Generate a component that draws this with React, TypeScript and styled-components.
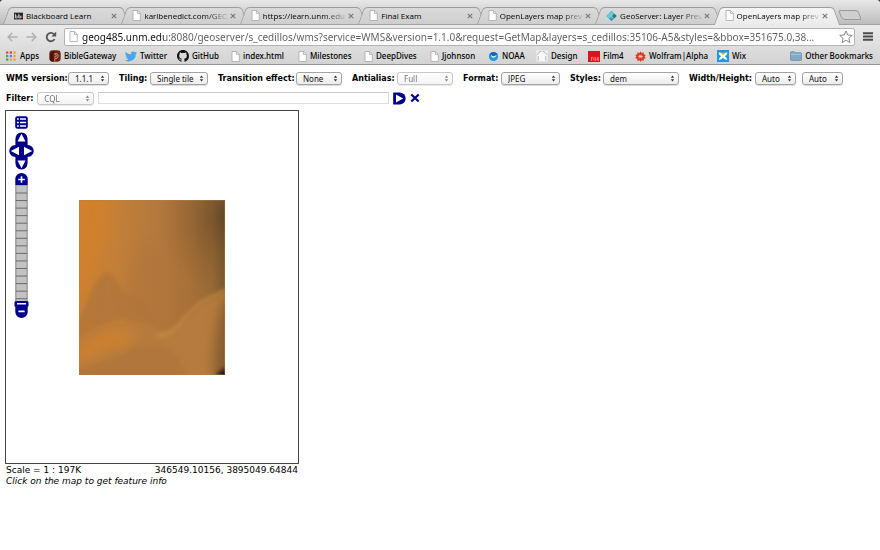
import React from "react";
import styled, { createGlobalStyle, css } from "styled-components";

const Global = createGlobalStyle`
  * { box-sizing: border-box; }
  html, body { margin: 0; background: #fff; }
  button, input, select { font: inherit; color: inherit; margin: 0; padding: 0; border: 0; background: none; }
  svg { display: block; flex: none; }
`;

const UI = `"Noto Sans", "Open Sans", sans-serif`;
const UI_NARROW = `"Open Sans", "Noto Sans", sans-serif`;
const VERDANA = `"DejaVu Sans", sans-serif`;

/* ---------- browser chrome ---------- */

const Chrome = styled.header`
  font-family: ${UI};
  background: linear-gradient(#222 0 4px, #ebebeb 25px, #d3d3d3);
  border-bottom: 1px solid #969696;
`;

const TabStrip = styled.nav`
  display: flex;
  align-items: flex-end;
  height: 25px;
  padding: 0 20px 0 6px;
  background: linear-gradient(#e8e8e8, #bdbdbd);
  border-bottom: 1px solid #a2a2a2;
  border-radius: 3px 3px 0 0;
`;

const Tab = styled.div<{ $active?: boolean }>`
  position: relative;
  isolation: isolate;
  display: flex;
  align-items: center;
  flex: 0 1 119px;
  min-width: 0;
  height: ${(p) => (p.$active ? "18px" : "17px")};
  padding: 0 7px ${(p) => (p.$active ? "1px" : "0")} 8px;
  gap: 3px;
  z-index: ${(p) => (p.$active ? 2 : 1)};
  margin-bottom: ${(p) => (p.$active ? "-1px" : "0")};

  &::before,
  &::after {
    content: "";
    position: absolute;
    z-index: -1;
    top: 0;
    bottom: 0;
    border: 1px solid #9c9c9c;
    border-bottom: 0;
    background: ${(p) => (p.$active ? "linear-gradient(#f4f4f4, #ebebeb)" : "linear-gradient(#dadada, #cecece)")};
  }
  &::before {
    left: 0;
    right: 50%;
    border-right: 0;
    border-top-left-radius: 4px;
    transform: skewX(-20deg);
  }
  &::after {
    left: 45%;
    right: -2px;
    border-left: 0;
    border-top-right-radius: 4px;
    transform: skewX(20deg);
  }
`;

const TabTitle = styled.button<{ $fade?: boolean }>`
  flex: 1;
  min-width: 0;
  text-align: left;
  font-family: ${UI_NARROW};
  font-size: 8px;
  font-weight: 500;
  line-height: 16px;
  color: #000;
  white-space: nowrap;
  ${(p) =>
    p.$fade &&
    css`
      mask-image: linear-gradient(90deg, #000 74%, rgba(0, 0, 0, 0.15));
    `}
`;

const TabClose = styled.button`
  display: flex;
  flex: none;
  align-items: center;
  width: 6px;
  height: 16px;
`;

const NewTab = styled.button`
  flex: none;
  width: 20px;
  height: 10px;
  margin: 0 0 4px 5px;
  border: 1px solid #999;
  border-radius: 2px 3px 2px 4px;
  background: #cfcfcf;
  transform: skewX(20deg);
`;

const NavRow = styled.div`
  display: flex;
  align-items: center;
  height: 23px;
  padding: 0 7px;
  gap: 8px;
`;

const IconButton = styled.button`
  display: flex;
  flex: none;
`;

const Omnibox = styled.form`
  flex: 1;
  min-width: 0;
  display: flex;
  align-items: center;
  gap: 4px;
  height: 18px;
  margin-left: -1px;
  padding: 0 1px 0 4px;
  background: #fff;
  border: 1px solid #b4b4b4;
  border-radius: 2px;
`;

const Address = styled.input`
  flex: 1;
  min-width: 0;
  height: 16px;
  font-family: ${UI};
  font-size: 10px;
  outline: 0;
  color: transparent;
  background: linear-gradient(90deg, #111 82px, #5c5c5c 82px);
  background-clip: text;
`;

const BookmarkBar = styled.nav`
  display: flex;
  align-items: center;
  height: 16px;
  padding: 0 7px 0 5px;
  white-space: nowrap;
`;

const Bookmark = styled.a<{ $w: number }>`
  display: flex;
  align-items: center;
  gap: 3px;
  flex: 0 1 ${(p) => p.$w}px;
  font-size: 8px;
  font-weight: 500;
  line-height: 14px;
  color: #000;
  text-decoration: none;
`;

const OtherBookmarks = styled.button`
  display: flex;
  align-items: center;
  gap: 3px;
  margin-left: auto;
  font-size: 8px;
  font-weight: 500;
  line-height: 14px;
  color: #000;
`;

/* ---------- page ---------- */

const Page = styled.main`
  padding: 6px 5px 0;
  font-family: ${VERDANA};
  font-size: 9px;
  color: #000;
`;

const ControlRow = styled.div`
  display: flex;
  align-items: center;
  height: 14px;
  margin-bottom: 6px;
  padding-left: 1px;

  &:last-of-type {
    margin-bottom: 5px;
  }
`;

const Field = styled.div<{ $w: number }>`
  display: flex;
  align-items: center;
  justify-content: space-between;
  flex: 0 0 ${(p) => p.$w}px;
  margin-right: 10px;
`;

const FieldLabel = styled.label`
  padding-top: 2px;
  font-size: 8px;
  font-weight: 700;
  line-height: 14px;
  white-space: nowrap;
`;

const SelectBox = styled.span<{ $w: number; $off?: boolean }>`
  position: relative;
  display: block;
  flex: none;
  width: ${(p) => p.$w}px;
  opacity: ${(p) => (p.$off ? 0.6 : 1)};
  svg {
    position: absolute;
    right: 4px;
    top: 3px;
    pointer-events: none;
  }
`;

const Select = styled.select`
  display: block;
  appearance: none;
  width: 100%;
  height: 13px;
  padding: 0 10px 0 6px;
  border: 1px solid #a3a3a3;
  border-radius: 3px;
  background: linear-gradient(#fff, #ececec);
  box-shadow: 0 1px 0 #ddd;
  font-family: ${UI};
  font-size: 8px;
  line-height: 11px;
  color: #111;
  opacity: 1;
`;

const Boxes = styled.div`
  display: flex;
  align-items: center;
  gap: 6px;
`;

const FilterRow = styled(ControlRow)`
  gap: 4px;
`;

const FilterInput = styled.input`
  flex: 0 1 291px;
  height: 12px;
  padding: 0 3px;
  border: 1px solid #dedede;
  border-top-color: #cacaca;
  font-size: 8px;
`;

const MapPanel = styled.section`
  width: 294px;
`;

const MapView = styled.div`
  position: relative;
  height: 354px;
  border: 1px solid #444;
  display: flex;
  align-items: center;
  justify-content: center;
`;

const MapControls = styled.div`
  position: absolute;
  left: 3px;
  top: 5px;
  display: flex;
  flex-direction: column;
  align-items: center;
  gap: 3px;
  width: 25px;
`;

const Status = styled.div`
  display: flex;
  justify-content: space-between;
  padding: 1px 1px 0;
  font-size: 9px;
  line-height: 11px;
`;

const Hint = styled.div`
  padding: 0 1px;
  font-size: 9px;
  line-height: 11px;
  font-style: italic;
`;

/* ---------- icons ---------- */

const PageIcon = () => (
  <svg width="9" height="11" viewBox="0 0 9 11">
    <path d="M1 .5h4.6L8.3 3.2V10.5H1z" fill="#fdfdfd" stroke="#a8a8a8" strokeWidth=".8" />
    <path d="M5.4.6v2.8h2.8" fill="none" stroke="#a8a8a8" strokeWidth=".8" />
  </svg>
);

const BbIcon = () => (
  <svg width="9" height="8" viewBox="0 0 10 8">
    <rect width="10" height="7.5" y=".3" fill="#222" />
    <path d="M1.5 1.6v4.6M1.5 4h1.3q1 0 1 1.1t-1 1.1H1.5M5.3 1.6v4.6M5.3 4h1.3q1 0 1 1.1t-1 1.1H5.3" fill="none" stroke="#fff" strokeWidth=".8" />
    <path d="M8.7 3.4v2.8" stroke="#c9a14a" strokeWidth=".8" />
  </svg>
);

const GeoIcon = () => (
  <svg width="11" height="12" viewBox="0 0 12 12">
    <path d="M6 .4 11.6 6 6 11.6.4 6z" fill="#2a9fc0" />
    <path d="M6 .4 8.6 3 6 5.6 3.4 3zM3.2 3.3 5.7 6 3 8.6.4 6z" fill="#5fcbd6" />
    <path d="M8.8 3.3 11.6 6 8.8 8.7 6.2 6z" fill="#1976a6" />
    <path d="M4.2 3l1.8.8L5 5.6zM6 6.6l1.6.7L6 8.6z" fill="#8cc35a" />
    <path d="M3.2 3.2 8.8 8.8M8.8 3.2 3.2 8.8" stroke="#e3f5f8" strokeWidth=".5" />
  </svg>
);

const CloseIcon = () => (
  <svg width="6" height="6" viewBox="0 0 6 6">
    <path d="M.8.8l4.4 4.4M5.2.8.8 5.2" stroke="#777" strokeWidth="1.1" />
  </svg>
);

const Arrow = ({ back }: { back?: boolean }) => (
  <svg width="11" height="10" viewBox="0 0 11 10">
    <path d={back ? "M5.2.8 1.2 5l4 4.2M1.4 5H10.6" : "M5.8.8l4 4.2-4 4.2M9.6 5H.4"} fill="none" stroke="#b2b2b2" strokeWidth="1.6" />
  </svg>
);

const Reload = () => (
  <svg width="12" height="12" viewBox="0 0 12 12">
    <path d="M9.6 8.1A4.2 4.2 0 1 1 9 3.2" fill="none" stroke="#555" strokeWidth="1.8" />
    <path d="M11.2.6v5H6.4z" fill="#555" />
  </svg>
);

const Star = () => (
  <svg width="14" height="14" viewBox="0 0 14 14">
    <path d="M7 1l1.8 4 4.4.4-3.3 2.9 1 4.3L7 10.3l-3.9 2.3 1-4.3L.8 5.4 5.2 5z" fill="#fff" stroke="#777" strokeWidth=".9" strokeLinejoin="round" />
  </svg>
);

const Menu = () => (
  <svg width="10" height="9" viewBox="0 0 10 9">
    <path d="M0 1.2h10M0 4.5h10M0 7.8h10" stroke="#4b4b4b" strokeWidth="2" />
  </svg>
);

const APP_COLOURS = ["#e0493e", "#e0493e", "#e8a33a", "#38a867", "#4a86e0", "#e8a33a", "#38a867", "#e8a33a", "#e8a33a"];
const AppsIcon = () => (
  <svg width="12" height="10" viewBox="0 0 12 10">
    {APP_COLOURS.map((c, i) => (
      <rect key={i} x={1 + (i % 3) * 3.7} y={0.4 + Math.floor(i / 3) * 3.5} width="2.3" height="2.3" fill={c} />
    ))}
  </svg>
);

const BibleIcon = () => (
  <svg width="12" height="12" viewBox="0 0 12 12">
    <rect x=".3" y=".3" width="11.4" height="11.4" rx="3.4" fill="#6e2412" />
    <path d="M1 9.6V4.6Q2.4.9 6.6 1.4 3 3.6 4.4 6.4L5.2 11.4H3Q1.2 11 1 9.6z" fill="#4a1206" />
    <path d="M5.6 11.6 5.9 8.7 8 8.4Q9.8 6.6 9.1 4.6 7.6 2.6 5.4 3.9 7.3 4.1 7.2 6.2L5.2 7.3" fill="#8f3b1e" stroke="#e3c1ab" strokeWidth=".6" />
  </svg>
);

const TwitterIcon = () => (
  <svg width="12" height="11" viewBox="0 0 24 20">
    <path d="M24 2.4a10 10 0 0 1-2.8.8A5 5 0 0 0 23.3.5a10 10 0 0 1-3.1 1.2 4.9 4.9 0 0 0-8.4 4.5A14 14 0 0 1 1.7 1a4.9 4.9 0 0 0 1.5 6.6A5 5 0 0 1 1 7v.1a4.9 4.9 0 0 0 3.9 4.8 5 5 0 0 1-2.2.1 4.9 4.9 0 0 0 4.6 3.4A10 10 0 0 1 0 17.4 14 14 0 0 0 21.5 5a10 10 0 0 0 2.5-2.6z" fill="#4aa6e8" />
  </svg>
);

const GithubIcon = () => (
  <svg width="12" height="12" viewBox="0 0 16 16">
    <path fill="#111" d="M8 0C3.58 0 0 3.58 0 8c0 3.54 2.29 6.53 5.47 7.59.4.07.55-.17.55-.38 0-.19-.01-.82-.01-1.49-2.01.37-2.53-.49-2.69-.94-.09-.23-.48-.94-.82-1.13-.28-.15-.68-.52-.01-.53.63-.01 1.08.58 1.23.82.72 1.21 1.87.87 2.33.66.07-.52.28-.87.51-1.07-1.78-.2-3.64-.89-3.64-3.95 0-.87.31-1.59.82-2.15-.08-.2-.36-1.02.08-2.12 0 0 .67-.21 2.2.82.64-.18 1.32-.27 2-.27s1.36.09 2 .27c1.53-1.04 2.2-.82 2.2-.82.44 1.1.16 1.92.08 2.12.51.56.82 1.27.82 2.15 0 3.07-1.87 3.75-3.65 3.95.29.25.54.73.54 1.48 0 1.07-.01 1.93-.01 2.2 0 .21.15.46.55.38A8 8 0 0 0 16 8c0-4.42-3.58-8-8-8z" />
  </svg>
);

const NoaaIcon = () => (
  <svg width="11" height="11" viewBox="0 0 11 11">
    <circle cx="5.5" cy="5.5" r="4.6" fill="#1b9be8" />
    <path d="M1.4 3.6Q2.8 1 5.5.9q2.8.1 4.1 2.6L7.4 5.6 5.4 4.8 3.6 5.4z" fill="#1a62b4" />
    <path d="M2.6 3.6q1.6 2 3 1.8 1.8-.3 3-1.8-.6 3-3.1 3.1-2.3-.1-2.9-3.1z" fill="#fff" />
  </svg>
);

const DesignIcon = () => (
  <svg width="12" height="12" viewBox="0 0 12 12">
    <rect x=".5" y=".5" width="11" height="11" fill="#f7f7f7" />
    <path d="M1 5.2 3 2l2.4-.7M6.6 1.2 9 2.2l2 2.6M2.2 6v4.8M9.8 6v4.8" fill="none" stroke="#a3a3a3" strokeWidth=".8" />
  </svg>
);

const FilmIcon = () => (
  <svg width="12" height="11" viewBox="0 0 12 11">
    <rect width="12" height="11" fill="#e0101c" />
    <path d="M3.4 6v4M3.4 6.3h1.4M3.4 8h1.2M6 6v4M7.4 6v4M10.2 10V6L8.6 8.8h2" stroke="#f6a0a0" strokeWidth=".7" fill="none" />
  </svg>
);

const WolframIcon = () => (
  <svg width="11" height="11" viewBox="0 0 11 11">
    <path d="M5.5.3 6.5 2 8.6 1.2 8.7 3.3 10.8 3.9 9.6 5.6 10.8 7.2 8.8 7.8 8.6 9.9 6.6 9.2 5.5 10.9 4.4 9.2 2.4 9.9 2.2 7.8.2 7.2 1.4 5.5.2 3.9 2.3 3.3 2.4 1.2 4.5 2z" fill="#e0391f" />
    <path d="M3.3 5.5h4.4M4.4 3.8l2.2 3.4M6.6 3.8 4.4 7.2" stroke="#ffe0d6" strokeWidth=".8" />
  </svg>
);

const WixIcon = () => (
  <svg width="12" height="12" viewBox="0 0 12 12">
    <rect width="12" height="12" fill="#2296e0" />
    <path d="M1.6 2.2 4.2 3 6 5l1.8-2 2.6-.8-.6 2.6-1.9 1.4 1.6 1.6.7 2.2-2.5-.7L6 7.7 4.3 9.3l-2.5.7.7-2.2 1.6-1.6-1.9-1.4z" fill="#fff" />
    <path d="M3 1.8 6 3.4l3-1.6L6.1 5.4z" fill="#f6cf31" />
  </svg>
);

const FolderIcon = () => (
  <svg width="12" height="10" viewBox="0 0 12 10">
    <path d="M.5 1.5q0-.8.8-.8h3l.8 1h5.6q.8 0 .8.8V8.6q0 .8-.8.8H1.3q-.8 0-.8-.8z" fill="#83a9c6" stroke="#5e88a8" strokeWidth=".7" />
    <path d="M1 3.3h10" stroke="#b5d0e3" strokeWidth=".8" />
  </svg>
);

const UpDown = () => (
  <svg width="5" height="7" viewBox="0 0 5 7">
    <path d="M2.5.5 4.2 2.8H.8zM2.5 6.5.8 4.2h3.4z" fill="#333" />
  </svg>
);

const NAVY = "#00008b";

const ApplyIcon = () => (
  <svg width="13" height="13" viewBox="0 0 13 13">
    <path d="M.2.4h6.4a6.1 6.1 0 0 1 0 12.2H.2z" fill={NAVY} />
    <path d="M3 2.6v7.8l7.2-3.9z" fill="#fff" />
  </svg>
);

const ResetIcon = () => (
  <svg width="10" height="10" viewBox="0 0 10 10">
    <path d="M1.3 1.5 8.7 8.5M8.7 1.5 1.3 8.5" stroke={NAVY} strokeWidth="2.2" />
  </svg>
);

const OptionsIcon = () => (
  <svg width="13" height="13" viewBox="0 0 13 13">
    <rect x=".2" y=".2" width="12.6" height="12.6" rx="2.2" fill={NAVY} />
    <path d="M2 3h1.8M2 6.5h1.8M2 10h1.8M5 3h6M5 6.5h6M5 10h6" stroke="#fff" strokeWidth="1.7" />
  </svg>
);

const PanIcon = () => (
  <svg width="25" height="38" viewBox="0 0 25 38">
    <path d="M6.4 13V7Q6.8.8 12.5.5 18.2.8 18.6 7v6q5.7.6 6.2 6-.5 5.4-6.2 6v6q-.4 6.2-6.1 6.5-5.7-.3-6.1-6.5v-6q-5.7-.6-6.2-6 .5-5.4 6.2-6z" fill={NAVY} />
    <path d="M12.5 1.8 16.5 9.4H8.5zM12.5 36.2 8.5 28.6h8zM1.8 19 10 14.7v8.6zM23.2 19 15 14.7v8.6z" fill="#fff" />
  </svg>
);

const TICKS = Array.from({ length: 15 }, (_, i) => 20 + i * 7.55);
const ZoomBarIcon = () => (
  <svg width="15" height="146" viewBox="0 0 15 146">
    <path d="M1.3 12.5V6.2a6.2 6.2 0 0 1 12.4 0v6.3z" fill={NAVY} />
    <path d="M7.5 3.2v6.6M4.2 6.5h6.6" stroke="#fff" strokeWidth="1.6" />
    <rect x="1.6" y="12.5" width="11.8" height="118" fill="#c2c2c2" />
    <path d="M1.8 12.5v118M13.2 12.5v118" stroke="#666" strokeWidth=".7" />
    {TICKS.map((y) => (
      <path key={y} d={`M1.8 ${y}h11.4`} stroke="#6b6b6b" strokeWidth="1" />
    ))}
    <path d="M1.3 132h12.4v6.9a6.2 6.2 0 0 1-12.4 0z" fill={NAVY} />
    <rect x=".5" y="128" width="14" height="6" rx="1.6" fill={NAVY} />
    <path d="M3 130.8h9M4.4 138.4h6.2" stroke="#fff" strokeWidth="1.6" />
  </svg>
);

const Elevation = () => (
  <svg width="146" height="175" viewBox="0 0 146 175" role="img" aria-label="dem">
    <defs>
      <linearGradient id="base" x1="0" y1="0" x2="1" y2="0">
        <stop offset="0" stopColor="#cc8032" />
        <stop offset=".25" stopColor="#c37f38" />
        <stop offset=".5" stopColor="#b57a3c" />
        <stop offset=".75" stopColor="#a87138" />
        <stop offset=".92" stopColor="#976934" />
        <stop offset="1" stopColor="#7a582e" />
      </linearGradient>
      <radialGradient id="corner" cx="1" cy="0.1" r=".45">
        <stop offset="0" stopColor="#4a3420" stopOpacity=".5" />
        <stop offset="1" stopColor="#7a5730" stopOpacity="0" />
      </radialGradient>
      <filter id="b2" x="-20%" y="-20%" width="140%" height="140%"><feGaussianBlur stdDeviation="2" /></filter>
      <filter id="b5" x="-40%" y="-30%" width="180%" height="160%"><feGaussianBlur stdDeviation="7" /></filter>
      <clipPath id="edge"><rect width="146" height="175" /></clipPath>
    </defs>
    <g clipPath="url(#edge)">
      <rect width="146" height="175" fill="url(#base)" />
      <path d="M-12-12H36Q30 30 22 60 14 70 6 88L-12 105z" fill="#d4812a" opacity=".7" filter="url(#b5)" />
      <path d="M-3 124 12 92Q20 74 28 72q8 3 14 18l22 10 22 30-20-5-24-6-20 8-25 16z" fill="#b0753b" opacity=".75" filter="url(#b2)" />
      <path d="M62 40q20 0 26 20l-2 30 6 38q-22 6-32-16L44 90q12-30 18-50z" fill="#b0753a" opacity=".6" filter="url(#b5)" />
      <path d="M-5 140 20 127q26-8 45-5 10 10 30 12 14-18 28-29l25-15V180H-5z" fill="#b67b3c" filter="url(#b2)" />
      <path d="M-5 150q20-16 35-19 22-4 27 5l-8 8-22 6-32 14z" fill="#d5812a" opacity=".85" filter="url(#b5)" />
      <path d="M-5 172Q22 162 42 155l16-9 26-1q18 8 26 35H-5z" fill="#b0763b" opacity=".9" filter="url(#b2)" />
      <path d="M78 135q14 0 22-10 14-18 23-23l25-13" fill="none" stroke="#cb904a" strokeWidth="3" opacity=".8" filter="url(#b2)" />
      <path d="M160 90l-16 14q-10 40-8 80h24z" fill="#5e4325" opacity=".6" filter="url(#b5)" />
      <rect width="146" height="175" fill="url(#corner)" />
      <path d="M137 177q2-6 12-9v10z" fill="#16100a" filter="url(#b2)" />
      <rect x=".5" y=".5" width="145" height="174" fill="none" stroke="#ad8346" strokeWidth="1" opacity=".4" />
    </g>
  </svg>
);

/* ---------- data ---------- */

const tabs = [
  { title: "Blackboard Learn", icon: <BbIcon /> },
  { title: "karlbenedict.com/GEO", icon: <PageIcon />, fade: true },
  { title: "https://learn.unm.edu", icon: <PageIcon />, fade: true },
  { title: "Final Exam", icon: <PageIcon /> },
  { title: "OpenLayers map previ", icon: <PageIcon />, fade: true },
  { title: "GeoServer: Layer Previ", icon: <GeoIcon />, fade: true },
  { title: "OpenLayers map previ", icon: <PageIcon />, fade: true, active: true },
];

const bookmarks = [
  { title: "Apps", icon: <AppsIcon />, w: 44 },
  { title: "BibleGateway", icon: <BibleIcon />, w: 76 },
  { title: "Twitter", icon: <TwitterIcon />, w: 52 },
  { title: "GitHub", icon: <GithubIcon />, w: 54 },
  { title: "index.html", icon: <PageIcon />, w: 67 },
  { title: "Milestones", icon: <PageIcon />, w: 66 },
  { title: "DeepDives", icon: <PageIcon />, w: 66 },
  { title: "Jjohnson", icon: <PageIcon />, w: 58 },
  { title: "NOAA", icon: <NoaaIcon />, w: 48 },
  { title: "Design", icon: <DesignIcon />, w: 52 },
  { title: "Film4", icon: <FilmIcon />, w: 47 },
  { title: "Wolfram|Alpha", icon: <WolframIcon />, w: 82 },
  { title: "Wix", icon: <WixIcon />, w: 40 },
];

const fields = [
  { id: "version", label: "WMS version:", w: 103, boxes: [{ w: 41, value: "1.1.1" }] },
  { id: "tiling", label: "Tiling:", w: 89, boxes: [{ w: 58, value: "Single tile" }] },
  { id: "transition", label: "Transition effect:", w: 124, boxes: [{ w: 46, value: "None" }] },
  { id: "antialias", label: "Antialias:", w: 101, boxes: [{ w: 56, value: "Full", off: true }] },
  { id: "format", label: "Format:", w: 97, boxes: [{ w: 59, value: "JPEG" }] },
  { id: "styles", label: "Styles:", w: 109, boxes: [{ w: 76, value: "dem" }] },
  { id: "size", label: "Width/Height:", w: 154, boxes: [{ w: 41, value: "Auto" }, { w: 41, value: "Auto" }] },
];

type DropProps = { id: string; value: string; w: number; off?: boolean; label?: string };
const Drop = ({ id, value, w, off, label }: DropProps) => (
  <SelectBox $w={w} $off={off}>
    <Select id={id} disabled={off} aria-label={label}>
      <option>{value}</option>
    </Select>
    <UpDown />
  </SelectBox>
);

export default function App() {
  return (
    <>
      <Global />
      <Chrome>
        <TabStrip>
          {tabs.map((t, i) => (
            <Tab key={i} $active={t.active}>
              {t.icon}
              <TabTitle $fade={t.fade}>{t.title}</TabTitle>
              <TabClose aria-label="Close tab"><CloseIcon /></TabClose>
            </Tab>
          ))}
          <NewTab aria-label="New tab" />
        </TabStrip>
        <NavRow>
          <IconButton aria-label="Back"><Arrow back /></IconButton>
          <IconButton aria-label="Forward"><Arrow /></IconButton>
          <IconButton aria-label="Reload"><Reload /></IconButton>
          <Omnibox>
            <PageIcon />
            <Address
              aria-label="Address"
              defaultValue="geog485.unm.edu:8080/geoserver/s_cedillos/wms?service=WMS&version=1.1.0&request=GetMap&layers=s_cedillos:35106-A5&styles=&bbox=351675.0,38..."
            />
            <IconButton type="button" aria-label="Bookmark this page"><Star /></IconButton>
          </Omnibox>
          <IconButton aria-label="Menu"><Menu /></IconButton>
        </NavRow>
        <BookmarkBar>
          {bookmarks.map((b) => (
            <Bookmark key={b.title} href="#" $w={b.w}>
              {b.icon}
              {b.title}
            </Bookmark>
          ))}
          <OtherBookmarks><FolderIcon />Other Bookmarks</OtherBookmarks>
        </BookmarkBar>
      </Chrome>
      <Page>
        <ControlRow>
          {fields.map((f) => (
            <Field key={f.id} $w={f.w}>
              <FieldLabel htmlFor={f.id}>{f.label}</FieldLabel>
              <Boxes>
                {f.boxes.map((b, i) => (
                  <Drop key={i} id={i ? `${f.id}-${i}` : f.id} label={i ? "Height" : undefined} {...b} />
                ))}
              </Boxes>
            </Field>
          ))}
        </ControlRow>
        <FilterRow>
          <FieldLabel htmlFor="filter">Filter:</FieldLabel>
          <Drop id="filter" value="CQL" w={57} off />
          <FilterInput aria-label="Filter expression" />
          <IconButton aria-label="Apply filter"><ApplyIcon /></IconButton>
          <IconButton aria-label="Reset filter"><ResetIcon /></IconButton>
        </FilterRow>
        <MapPanel>
          <MapView>
            <Elevation />
            <MapControls>
              <IconButton aria-label="Options"><OptionsIcon /></IconButton>
              <IconButton aria-label="Pan"><PanIcon /></IconButton>
              <IconButton aria-label="Zoom"><ZoomBarIcon /></IconButton>
            </MapControls>
          </MapView>
          <Status>
            <span>Scale = 1 : 197K</span>
            <span>346549.10156, 3895049.64844</span>
          </Status>
          <Hint>Click on the map to get feature info</Hint>
        </MapPanel>
      </Page>
    </>
  );
}
